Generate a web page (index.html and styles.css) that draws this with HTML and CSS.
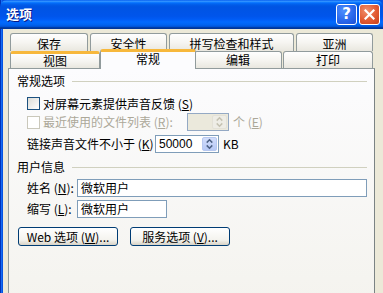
FILE: index.html
```html
<!DOCTYPE html>
<html lang="zh-CN">
<head>
    <meta charset="UTF-8">
    <title>选项</title>
    <link rel="stylesheet" href="styles.css">
</head>
<body>
    <div class="window">
        <!-- Title bar -->
        <div class="titlebar">
            <span class="title">选项</span>
            <div class="caption-buttons">
                <span class="cap-btn help">?</span>
                <span class="cap-btn close">
                    <svg width="11" height="11" viewBox="0 0 11 11"><path d="M1.5 1.5L9.5 9.5M9.5 1.5L1.5 9.5" stroke="#fff" stroke-width="2.2" stroke-linecap="square"/></svg>
                </span>
            </div>
        </div>

        <div class="client">
            <!-- Tabs (two rows) -->
            <div class="tabs">
                <div class="tab-row back">
                    <div class="tab tab-save">保存</div>
                    <div class="tab tab-security">安全性</div>
                    <div class="tab tab-spelling">拼写检查和样式</div>
                    <div class="tab tab-asia">亚洲</div>
                </div>
                <div class="tab-row front">
                    <div class="tab tab-view hot">视图</div>
                    <div class="tab tab-general active">常规</div>
                    <div class="tab tab-edit">编辑</div>
                    <div class="tab tab-print">打印</div>
                </div>
            </div>

            <!-- Tab page -->
            <div class="panel">
                <div class="group-title group-general">常规选项</div>

                <div class="row row-check1">
                    <span class="checkbox"></span>
                    <span>对屏幕元素提供声音反馈 (<u>S</u>)</span>
                </div>

                <div class="row row-check2 disabled">
                    <span class="checkbox"></span>
                    <span class="recent-label">最近使用的文件列表 (<u>R</u>):</span>
                    <span class="spinbox">
                        <span class="spin-value"></span>
                        <span class="spin-buttons">
                            <svg width="14" height="14" viewBox="0 0 14 14"><path d="M4 5.5L7 2.5L10 5.5M4 8.5L7 11.5L10 8.5" fill="none" stroke="#c5c2b2" stroke-width="1.6"/></svg>
                        </span>
                    </span>
                    <span class="unit">个 (<u>E</u>)</span>
                </div>

                <div class="row row-sound">
                    <span class="sound-label">链接声音文件不小于 (<u>K</u>)</span>
                    <span class="spinbox">
                        <span class="spin-value">50000</span>
                        <span class="spin-buttons">
                            <svg width="14" height="14" viewBox="0 0 14 14"><path d="M4 5.5L7 2.5L10 5.5M4 8.5L7 11.5L10 8.5" fill="none" stroke="#4d6185" stroke-width="1.6"/></svg>
                        </span>
                    </span>
                    <span class="unit">KB</span>
                </div>

                <div class="group-title group-user">用户信息</div>

                <div class="row field-row name-row">
                    <span class="field-label">姓名 (<u>N</u>):</span>
                    <span class="textbox name-box">微软用户</span>
                </div>
                <div class="row field-row initials-row">
                    <span class="field-label">缩写 (<u>L</u>):</span>
                    <span class="textbox initials-box">微软用户</span>
                </div>

                <div class="button-row">
                    <button class="xp-button">Web 选项 (<u>W</u>)...</button>
                    <button class="xp-button">服务选项 (<u>V</u>)...</button>
                </div>
            </div>
        </div>
    </div>
</body>
</html>
```

FILE: styles.css
```css
html, body {
    margin: 0;
    padding: 0;
}

body {
    width: 383px;
    height: 293px;
    overflow: hidden;
    font-family: "Noto Sans CJK SC", "Liberation Sans", sans-serif;
    font-size: 12px;
    color: #000;
}

.window {
    height: 293px;
    display: flex;
    flex-direction: column;
    background: linear-gradient(90deg, #0032b8 0, #0032b8 1px, #166cf4 1px, #166cf4 2px, #0553e2 2px);
}

/* Title bar */
.titlebar {
    height: 29px;
    flex-shrink: 0;
    display: flex;
    align-items: center;
    padding: 0 3px 0 6px;
    border-radius: 7px 7px 0 0;
    background: linear-gradient(to bottom,
        #0058ee 0%, #3593ff 4%, #288eff 6%, #127dff 8%, #036ffc 10%,
        #0262ee 14%, #0057e5 20%, #0054e3 24%, #0055eb 56%, #005bf5 66%,
        #026afe 76%, #0062ef 86%, #0052d6 92%, #0040ab 94%, #003092 100%);
}

.title {
    flex: 1;
    color: #fff;
    font-weight: bold;
    font-size: 13px;
    line-height: 14px;
    margin-top: -1px;
    text-shadow: 1px 1px #0a1883;
}

.caption-buttons {
    display: flex;
    gap: 2px;
    margin-top: -1px;
}

.cap-btn {
    width: 21px;
    height: 21px;
    box-sizing: border-box;
    border: 1px solid #fff;
    border-radius: 3px;
    display: flex;
    align-items: center;
    justify-content: center;
}

.help {
    background: radial-gradient(circle at 35% 30%, #4d8ffe 0%, #2a68ec 55%, #1c4fd4 100%);
    color: #fff;
    font-family: "DejaVu Sans", sans-serif;
    font-weight: bold;
    font-size: 15px;
    line-height: 1;
}

.close {
    background: radial-gradient(circle at 35% 30%, #f0906d 0%, #e25a32 55%, #c6401b 100%);
}

/* Client area */
.client {
    flex: 1;
    margin-left: 3px;
    background: #ece9d8;
    padding: 4px 0 0 5px;
    overflow: hidden;
}

.tabs {
    width: 363px;
    padding-left: 2px;
}

.tab-row {
    display: flex;
}

.tab-row.back {
    height: 18px;
}

.tab-row.front {
    height: 17px;
}

.tab {
    box-sizing: border-box;
    height: 100%;
    flex-shrink: 0;
    border: 1px solid #919b9c;
    border-bottom: none;
    border-radius: 3px 3px 0 0;
    background: linear-gradient(#fefefe, #f6f5f1 50%, #e9e7df);
    display: flex;
    align-items: center;
    justify-content: center;
    line-height: 12px;
}

.back .tab {
    padding-top: 2px;
}

.tab-save { width: 78px; margin-right: 2px; }
.tab-security { width: 77px; margin-right: 2px; }
.tab-spelling { width: 125px; margin-right: 2px; }
.tab-asia { width: 77px; }

.tab-view { width: 90px; margin-right: 2px; }
.tab-general { width: 92px; }
.tab-edit { width: 88px; margin-right: 1px; }
.tab-print { width: 90px; }

.tab.hot {
    border-top: 3px solid #f7b83c;
    padding-bottom: 1px;
}

.tab.active {
    position: relative;
    z-index: 1;
    height: 20px;
    margin: -2px -2px 0 -2px;
    width: 96px;
    border-top: 3px solid #f7b83c;
    background: #fcfcfe;
    padding-bottom: 4px;
}

/* Tab page */
.panel {
    box-sizing: border-box;
    width: 367px;
    height: 240px;
    border: 1px solid #919b9c;
    border-right-color: #7b8384;
    background: linear-gradient(#fcfcfe, #f4f3ee);
    padding: 5px 7px 0 8px;
}

.group-title {
    display: flex;
    align-items: center;
    height: 14px;
    line-height: 14px;
}

.group-title::after {
    content: "";
    flex: 1;
    height: 1px;
    margin-left: 7px;
    background: #d0d0bf;
}

.row {
    display: flex;
    align-items: center;
    padding-left: 10px;
    line-height: 14px;
}

.row-check1 {
    height: 17px;
    margin-top: 7px;
}

.row-check2 {
    height: 18px;
    margin-top: 1px;
}

.row-sound {
    height: 18px;
    margin-top: 4px;
}

.checkbox {
    width: 13px;
    height: 13px;
    box-sizing: border-box;
    border: 1px solid #1c5180;
    background: linear-gradient(135deg, #dcdcd7, #fff);
    margin-right: 3px;
    flex-shrink: 0;
}

.disabled {
    color: #aca899;
}

.disabled .checkbox {
    border-color: #cac8bb;
    background: #fff;
}

.recent-label {
    width: 144px;
}

.sound-label {
    width: 128px;
}

.spinbox {
    box-sizing: border-box;
    height: 18px;
    border: 1px solid #7f9db9;
    background: #fff;
    display: flex;
    align-items: center;
    padding: 1px;
}

.row-check2 .spinbox {
    width: 42px;
    border-color: #94a9c4;
    background: #ebe9dc;
}

.row-sound .spinbox {
    width: 64px;
}

.spin-value {
    flex: 1;
    padding-left: 2px;
    font-family: "Liberation Sans", sans-serif;
}

.spin-buttons {
    width: 15px;
    height: 14px;
    box-sizing: border-box;
    border: 1px solid #b7c8f0;
    border-radius: 2px;
    background: linear-gradient(#d2ddfb, #b7c9f6);
    display: flex;
    align-items: center;
    justify-content: center;
}

.row-check2 .spin-buttons {
    border-color: #e3e1d7;
    background: #eeede6;
}

.unit {
    margin-left: 4px;
}

.group-user {
    margin-top: 7px;
}

.field-row {
    height: 18px;
}

.name-row {
    margin-top: 5px;
}

.initials-row {
    margin-top: 3px;
}

.field-label {
    width: 50px;
    flex-shrink: 0;
}

.textbox {
    box-sizing: border-box;
    height: 18px;
    border: 1px solid #7f9db9;
    background: #fff;
    padding-left: 3px;
    display: flex;
    align-items: center;
}

.name-box {
    width: 290px;
}

.initials-box {
    width: 90px;
}

.button-row {
    display: flex;
    gap: 12px;
    margin-top: 9px;
    padding-left: 1px;
}

.xp-button {
    width: 100px;
    height: 19px;
    box-sizing: border-box;
    border: 1px solid #003c74;
    border-radius: 3px;
    background: linear-gradient(#fff, #f4f3ee 70%, #d8d2c6);
    font-family: "Noto Sans CJK SC", "Liberation Sans", sans-serif;
    font-size: 12px;
    line-height: 14px;
    padding: 0;
    color: #000;
}
```
